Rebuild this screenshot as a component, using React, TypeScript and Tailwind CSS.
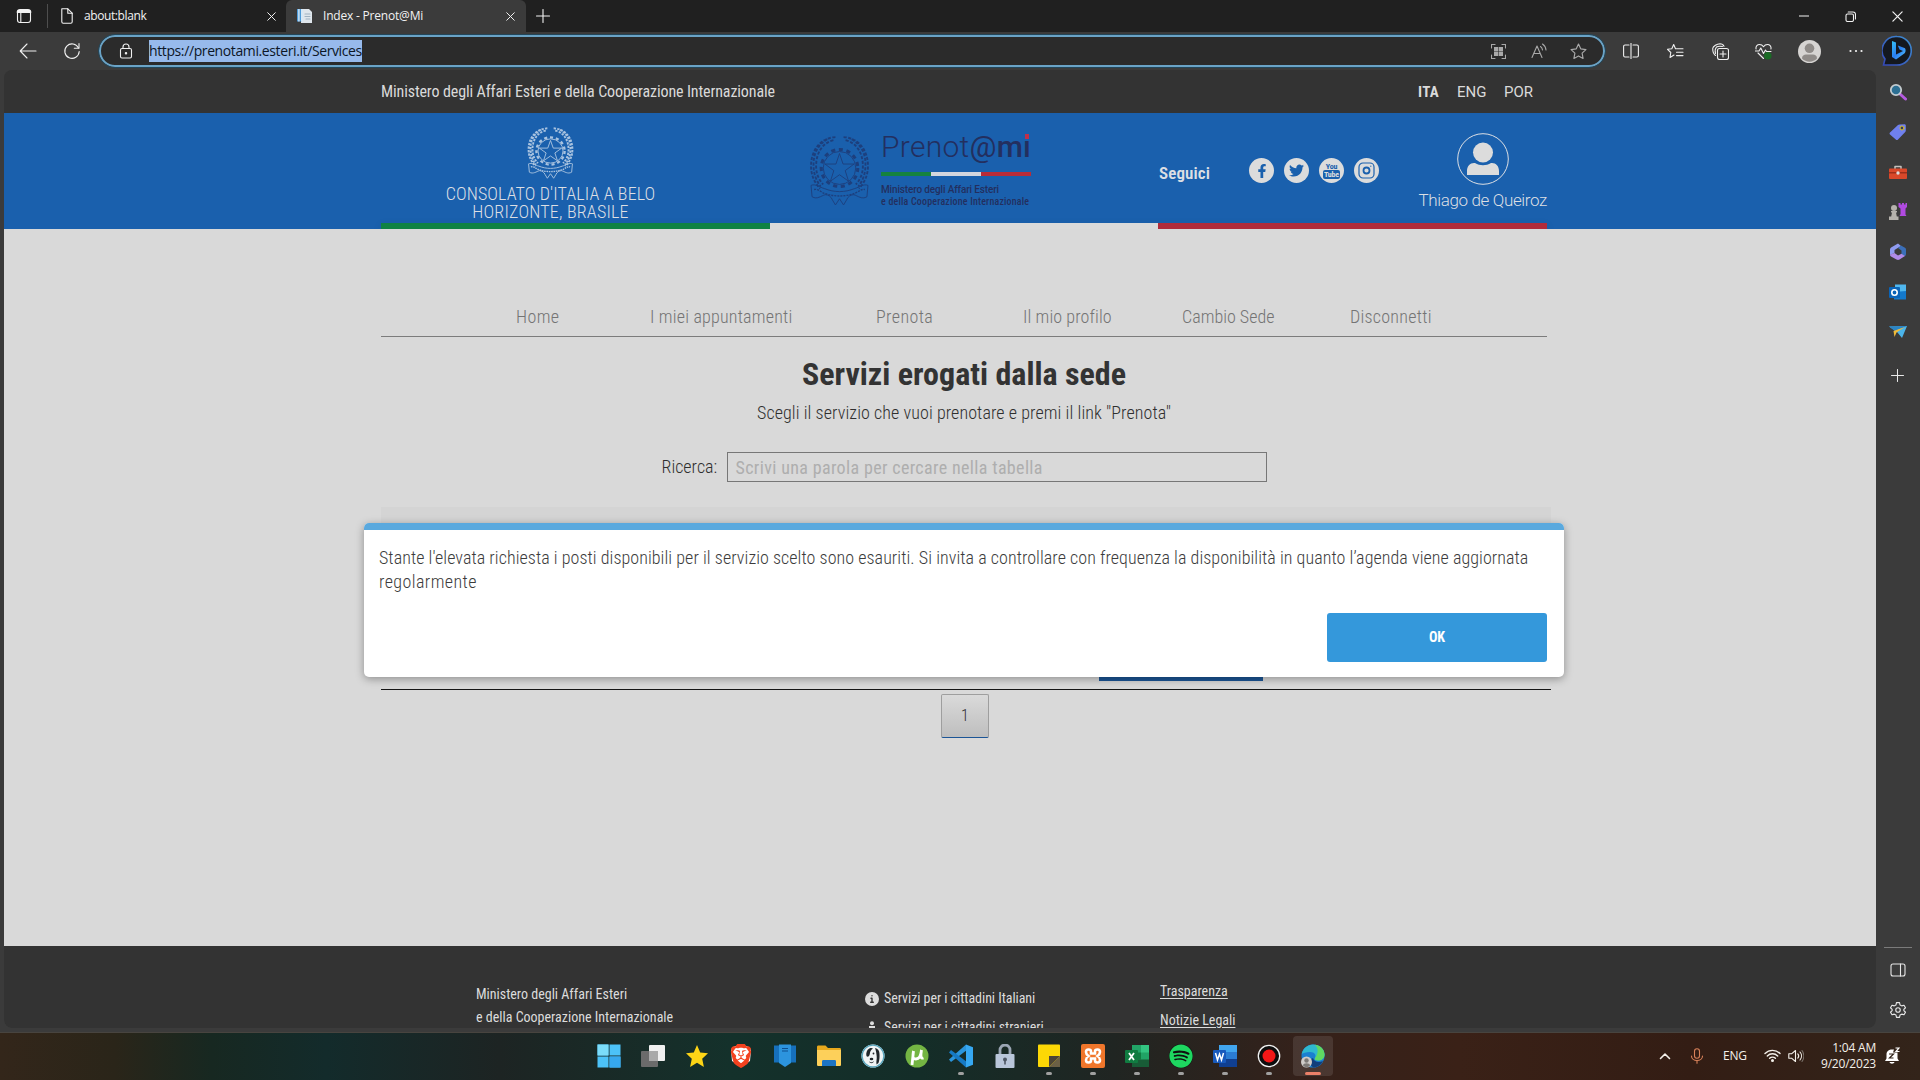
import type { ReactNode } from "react";
import { FaFacebookF, FaSpotify } from "react-icons/fa";
import { SiBrave } from "react-icons/si";
import { FaTwitter } from "react-icons/fa6";

function Svg({ s = 16, vb = "0 0 16 16", className = "", children }: { s?: number; vb?: string; className?: string; children: ReactNode }) {
  return (
    <svg width={s} height={s} viewBox={vb} fill="none" stroke="currentColor" strokeWidth="1.1" strokeLinecap="round" strokeLinejoin="round" className={`shrink-0 ${className}`}>
      {children}
    </svg>
  );
}

const CloseIcon = ({ s = 10 }: { s?: number }) => (
  <Svg s={s} vb="0 0 10 10"><path d="M.8.8l8.4 8.4M9.2.8L.8 9.2" /></Svg>
);

const PlusIcon = ({ s = 14 }: { s?: number }) => (
  <Svg s={s} vb="0 0 14 14"><path d="M7 .5v13M.5 7h13" /></Svg>
);

function TabStrip() {
  return (
    <div className="flex h-8 w-full shrink-0 items-center bg-[#202020] text-[#f2f2f2]">
      <div className="flex w-12 justify-center border-r border-[#4e4e4e] py-0.5">
        <Svg s={16} className="my-0.5">
          <rect x="1.5" y="1.5" width="13" height="13" rx="2.5" />
          <path d="M1.5 4h13M2 3h12" strokeWidth="1.8" />
          <path d="M4.8 5v9.5" />
        </Svg>
      </div>
      <div className="flex h-full w-[238px] items-center pl-[11px]">
        <Svg s={16}>
          <path d="M2.8.8h6l4.4 4.4v8.6c0 .8-.5 1.4-1.4 1.4H4.2c-.9 0-1.4-.6-1.4-1.4z" />
          <path d="M8.8.8v4.4h4.4" />
        </Svg>
        <span className="ml-[9px] w-[183px] whitespace-nowrap text-xs tracking-[-0.4px]">about:blank</span>
        <CloseIcon s={9} />
      </div>
      <div className="flex h-full w-[240px] items-center rounded-t-md bg-[#3b3b3b] pl-[11px]">
        <Svg s={16}>
          <path d="M4 1h8l3 3v11H4z" fill="#dfe6ec" stroke="none" />
          <path d="M0 1h4.5v12.5H0z" fill="#4e9bd8" stroke="none" />
          <path d="M1.200 1h1.400v12.500H1.200zM4 1h2v12.500H4z" fill="#d6e8f6" stroke="none" />
          <path d="M8 6h5M8 8.500h5M9 11h4" stroke="#9fb2c1" />
        </Svg>
        <span className="ml-[10px] w-[183px] whitespace-nowrap text-xs tracking-[-0.2px]">Index - Prenot@Mi</span>
        <CloseIcon s={9} />
      </div>
      <div className="ml-[10px] flex-1"><PlusIcon s={14} /></div>
      <div className="flex items-center pr-[17px]">
        <Svg s={10} vb="0 0 10 10"><path d="M0 5h10" /></Svg>
        <Svg s={11} vb="0 0 11 11" className="ml-9">
          <rect x="1" y="3" width="7.500" height="7.500" rx="1.5" />
          <path d="M3.200 1h4.800c1.500 0 2.500 1 2.500 2.500v4.500" />
        </Svg>
        <span className="ml-9"><CloseIcon s={11} /></span>
      </div>
    </div>
  );
}

function BingBadge() {
  return (
    <svg width="30" height="32" viewBox="0 0 30 32" className="shrink-0">
      <defs>
        <linearGradient id="bingRing" x1="0" y1="1" x2="1" y2="0">
          <stop offset="0" stopColor="#3447b8" />
          <stop offset="1" stopColor="#3f8fd0" />
        </linearGradient>
        <linearGradient id="bingB" x1="0" y1="0" x2="1" y2="1">
          <stop offset="0" stopColor="#35c3f5" />
          <stop offset=".5" stopColor="#2a7df0" />
          <stop offset="1" stopColor="#55c8ff" />
        </linearGradient>
      </defs>
      <path d="M15 1.500a14 14 0 1 1 0 28.500H1.500l1.500-6A14 14 0 0 1 15 1.500z" fill="#14181f" stroke="url(#bingRing)" strokeWidth="1.600" />
      <path d="M10 6l4 1.500v12l7-3.500-3.500-1.500-1.700-4 6.700 2.500c1.500.6 1.500 4.500-.2 5.600L14 24.500l-4-2.500z" fill="url(#bingB)" />
    </svg>
  );
}

function Toolbar() {
  return (
    <div className="flex h-[38px] w-full shrink-0 items-center bg-[#3b3b3b] pr-2 text-[#f0f0f0]">
      <Svg s={18} vb="0 0 18 18" className="ml-[19px]"><path d="M17 9H1.500M8 2L1.200 9 8 16" /></Svg>
      <Svg s={18} vb="0 0 18 18" className="ml-[26px]">
        <path d="M15.500 6A7.200 7.200 0 1 0 16.200 9.500" />
        <path d="M16 1.500V6.200h-4.700" />
      </Svg>
      <div className="ml-[18px] flex h-8 w-[1506px] items-center rounded-full border-2 border-[#6aa3c6] bg-[#2b2b2b] pl-[17px] outline-1 outline-[#23475b]">
        <Svg s={16}>
          <rect x="2.500" y="5.500" width="11" height="9.500" rx="1.500" />
          <path d="M5 5.500V4a3 3 0 0 1 6 0v1.500" />
          <circle cx="8" cy="10.200" r=".7" fill="currentColor" />
        </Svg>
        <span className="ml-[15px] h-[22px] whitespace-nowrap bg-[#97baec] text-sm leading-[22px] tracking-[-0.39px] text-[#0c1626]">https://prenotami.esteri.it/Services</span>
        <div className="flex flex-1 items-center justify-end pr-4 text-[#a9a9a9]">
          <Svg s={15} vb="0 0 15 15">
            <path d="M.5 4V.5H4M11 .5h3.500V4M14.500 11v3.500H11M4 14.500H.5V11" />
            <path d="M3 3h4.200v4.200H3zM7.800 3H12v4.200H7.800zM3 7.800h4.200V12H3zM7.800 7.800H12V12H7.800z" fill="currentColor" stroke="none" />
          </Svg>
          <Svg s={16} className="ml-[25px]">
            <path d="M1 14.500L6 3l5 11.500M2.800 10.500h6.400" />
            <path d="M9.500 3.500a5 5 0 0 1 2 3.500M11.500 1a8 8 0 0 1 3.500 6" />
          </Svg>
          <Svg s={17} vb="0 0 16 16" className="ml-[23px]">
            <path d="M8 1l2.100 4.500 4.900.7-3.600 3.400.9 4.900L8 12.200l-4.300 2.300.9-4.900L1 6.200l4.900-.7z" />
          </Svg>
        </div>
      </div>
      <Svg s={16} className="ml-[18px]">
        <path d="M8 0v16M6 2H2C1.200 2 .6 2.600.6 3.400v9.200c0 .8.6 1.400 1.400 1.400h4M10 2h4c.8 0 1.400.6 1.400 1.400v9.200c0 .8-.6 1.400-1.400 1.400h-4" />
      </Svg>
      <Svg s={17} vb="0 0 17 17" className="ml-7">
        <path d="M8.500 5.800L6.700 1.500 4.800 5.700.5 6.300l3.300 3.200-.8 5 4-2.500M8.500 5.800H16M9.500 9.200H16M9.500 12.600H16" />
      </Svg>
      <Svg s={17} vb="0 0 17 17" className="ml-7">
        <rect x="5.500" y="5.500" width="11" height="11" rx="2" />
        <path d="M11 8v6M8 11h6M3.500 12.500C1.500 11 .7 8 .7 5.500 1 3 5 .8 8 .7c2 0 3.300 1 4 2.500M3.500 10.500c-.5-2-.3-5 1-6.500 1.500-.8 4-.8 6-.5" />
      </Svg>
      <Svg s={17} vb="0 0 17 17" className="ml-[26px]">
        <path d="M1 6C.5 3 2.500 1.500 4.500 1.500S7.700 2.500 8.500 3.700C9.300 2.500 10.500 1.500 12.500 1.500S16.500 3 16 6M3 10l5.500 5.500" />
        <path d="M0 8h4l1.800-3 2.700 5.500L10.500 7l1 1.500H16" />
        <circle cx="12.800" cy="12.800" r="3.800" fill="#1a6b25" stroke="none" />
      </Svg>
      <svg width="23" height="23" viewBox="0 0 23 23" className="ml-[26px] shrink-0">
        <circle cx="11.500" cy="11.500" r="11.500" fill="#d6d4d2" />
        <circle cx="11.500" cy="8.300" r="4.800" fill="#8f8b88" />
        <path d="M4 18.500c0-3 2-4 4-4h7c2 0 4 1 4 4a10.500 10.500 0 0 1-15 0z" fill="#8f8b88" />
      </svg>
      <Svg s={14} vb="0 0 14 14" className="ml-7">
        <path d="M1.500 7h.01M7 7h.01M12.500 7h.01" strokeWidth="2.200" />
      </Svg>
      <span className="ml-auto"><BingBadge /></span>
    </div>
  );
}

function Sidebar() {
  return (
    <div className="flex w-11 shrink-0 flex-col items-center bg-[#3b3b3b] pt-[13px] pr-px text-[#e8e8e8]">
      <div className="flex flex-col items-center gap-[22px]">
        <Svg s={18} vb="0 0 18 18">
          <path d="M11 11l5.500 5" stroke="#b45be0" strokeWidth="3" />
          <circle cx="7" cy="7" r="5.200" fill="#2c6f93" stroke="#c3cbcf" strokeWidth="1.800" />
        </Svg>
        <Svg s={18} vb="0 0 18 18">
          <path d="M1 9.500L9 2c.5-.4 1-.6 1.600-.6L15.500 1.200c.8 0 1.300.6 1.300 1.300v5c0 .7-.3 1.200-.8 1.700l-7 7.200c-.7.7-1.500.7-2.200 0L1 11.500c-.6-.6-.6-1.400 0-2z" fill="#6f80ee" stroke="none" />
          <circle cx="13" cy="5" r="2" fill="#35395a" stroke="#d8c02c" strokeWidth="1" />
        </Svg>
        <Svg s={18} vb="0 0 18 18">
          <path d="M6 6V3.500h6V6" stroke="#c6c1bd" strokeWidth="1.500" />
          <path d="M0 6.500C0 6 .5 5.500 1 5.500h16c.5 0 1 .5 1 1V15c0 .5-.5 1-1 1H1c-.5 0-1-.5-1-1z" fill="#d9482a" stroke="none" />
          <path d="M0 9h18v1.500H0z" fill="#9c2f1b" stroke="none" />
          <circle cx="9" cy="10" r="1.700" fill="#ddd" stroke="none" />
        </Svg>
        <Svg s={18} vb="0 0 18 18">
          <path d="M9.500 0h2v1.500H13V0h2v1.500h1.500V0H18v4l-1.500 1.500v6l1 1.500h-7l1-2V5.500L9.500 4z" fill="#b04ae0" stroke="none" />
          <circle cx="5" cy="5" r="3" fill="#b5b2ac" stroke="none" />
          <path d="M2 8h6v1.500H7l.8 4H9.500V17H0v-3.500h2.200l.8-4H2z" fill="#b5b2ac" stroke="none" />
        </Svg>
        <Svg s={18} vb="0 0 18 18">
          <path d="M9 .5L2.500 4.200C1.500 4.800 1 5.500 1 6.600V12l4.500-2V7L12 3z" fill="#8f9bf0" stroke="none" />
          <path d="M12 2.500l4 2.300c.7.400 1 1 1 1.800V11c0 1-.4 1.800-1.200 2.200L12.500 11V7.500L9 5z" fill="#3b6fb8" stroke="none" />
          <path d="M1 11.800L5.500 10 9 12.500l3.500-1.700 3.500 2.200-5.500 3.600c-1 .6-2 .6-3 0L2 13.500C1.300 13 1 12.500 1 11.800z" fill="#b08be8" stroke="none" />
        </Svg>
        <Svg s={18} vb="0 0 18 18">
          <path d="M6 1.500h11V12H6z" fill="#50b7ee" stroke="none" />
          <path d="M5 9l12-1v8.500H5z" fill="#1379cc" stroke="none" />
          <rect x="0" y="4" width="11" height="11" rx="1" fill="#0a64b8" stroke="none" />
          <circle cx="5.500" cy="9.500" r="2.700" stroke="#fff" strokeWidth="1.600" />
        </Svg>
        <Svg s={18} vb="0 0 18 18">
          <path d="M0 3.500L18 3 13 15 8.500 9.500z" fill="#4bb4ea" stroke="none" />
          <path d="M0 3.500L18 3 6 8z" fill="#2b84c4" stroke="none" />
          <path d="M4.500 8L16 4 7.500 9.500 5.500 14z" fill="#f0bb3a" stroke="none" />
        </Svg>
      </div>
      <div className="mt-7"><PlusIcon s={13} /></div>
      <div className="flex-1" />
      <div className="h-px w-7 bg-[#7b7b7b]" />
      <Svg s={16} className="mt-[14px]">
        <rect x="1" y="2" width="14" height="12" rx="2" />
        <path d="M10.500 2v12" />
      </Svg>
      <Svg s={18} vb="0 0 24 24" className="mt-[23px] mb-[13px]">
        <path strokeWidth="1.500" d="M12 2l2 .2.700 3 2.300 1.300L20 5.600l2 3.400-2.200 2.200v1.600L22 15l-2 3.400-3-.9-2.300 1.300-.7 3h-4l-.7-3L7 17.500l-3 .9L2 15l2.200-2.200v-1.600L2 9l2-3.400 3 .9 2.300-1.300.7-3z" />
        <circle cx="12" cy="12" r="3" strokeWidth="1.500" />
      </Svg>
    </div>
  );
}

const STAR = "M30 19l3.500 10.200h10.800l-8.700 6.400 3.300 10.300L30 39.600l-8.900 6.300 3.300-10.300-8.700-6.400h10.800z";

function Emblem({ className, w, h, stroke }: { className: string; w: number; h: number; stroke: number }) {
  return (
    <svg width={w} height={h} viewBox="0 0 60 70" fill="none" stroke="currentColor" strokeWidth={stroke} className={`shrink-0 ${className}`} preserveAspectRatio="none">
      <circle cx="30" cy="33" r="16" />
      <circle cx="30" cy="33" r="18" strokeDasharray="4 3.600" strokeWidth="3" />
      <path d={STAR} />
      <path d="M26 3C10 4 2 17 2 31c0 10 4 17 9 22M24 6C12 9 7 20 7 31c0 8 3 14 7 18M18 5C8 11 4 20 4.500 31c0 8 3 15 7 20" strokeDasharray="3 1.600" strokeWidth={stroke * 2} />
      <path d="M34 3c16 1 24 14 24 28 0 10-4 17-9 22M36 6c12 3 17 14 17 25 0 8-3 14-7 18M42 5c10 6 14 15 13.500 26 0 8-3 15-7 20" strokeDasharray="3 1.600" strokeWidth={stroke * 2} />
      <path d="M2 50c4-2 9 2 13 3 10 4 20 4 30 0 4-1 9-5 13-3l-1 11c-5 3-9-1-13-2-3 0-6 2-7 5l-3 5-4-6-4 6-3-5c-1-3-4-5-7-5-4 1-8 5-13 2z" />
      <path d="M5 54c4-1 7 3 11 4 9 3 19 3 28 0 4-1 7-5 11-4" strokeWidth={stroke * 1.5} strokeDasharray="2 1" />
    </svg>
  );
}

function SocialCircle({ children }: { children: ReactNode }) {
  return <div className="flex size-[25px] items-center justify-center rounded-full bg-[#dcdcdc] text-[#1a60ad]">{children}</div>;
}

function SiteHeader() {
  return (
    <header className="shrink-0 [font-stretch:75%]">
      <div className="flex h-[43px] bg-[#333] pl-[377px] text-base text-[#dadada]">
        <span className="w-[1037px] whitespace-nowrap leading-[43px] tracking-[-0.12px]">Ministero degli Affari Esteri e della Cooperazione Internazionale</span>
        <nav className="flex text-[15px] leading-[44px]">
          <span className="w-[39px] font-bold tracking-[0.3px]">ITA</span>
          <span className="w-[47px] [font-stretch:88%]">ENG</span>
          <span className="[font-stretch:88%]">POR</span>
        </nav>
      </div>
      <div className="h-[116px] bg-[#1a60ad] pl-[377px]">
        <div className="flex h-[110px] w-[1166px] text-[#dcdfe4]">
          <div className="flex w-[389px] flex-col items-center pt-[13px] pr-[50px]">
            <Emblem w={47} h={53} stroke={1.2} className="text-[#a9c3e0]" />
            <div className="mt-[6px] flex flex-col items-center whitespace-nowrap text-lg leading-[18px] font-light">
              <span className="tracking-[0.12px]">CONSOLATO D'ITALIA A BELO</span>
              <span className="tracking-[0.2px]">HORIZONTE, BRASILE</span>
            </div>
          </div>
          <div className="flex w-[389px] pl-[39px] text-[#232f5f]">
            <Emblem w={61} h={72} stroke={0.9} className="mt-[21px] text-[#1d3f7d]" />
            <div className="ml-[11px] w-[150px] pt-[17px]">
              <div className="whitespace-nowrap text-[30px] leading-[34px] font-light tracking-[0.3px] [font-stretch:100%]">
                Prenot<span className="font-normal">@</span><span className="font-medium tracking-normal">m</span><span className="relative font-medium">ı<span className="absolute top-[5px] left-[2px] h-[5px] w-1 bg-[#c0304a]" /></span>
              </div>
              <div className="mt-2 flex h-1">
                <div className="flex-1 bg-[#15823f]" /><div className="flex-1 bg-[#d3d6de]" /><div className="flex-1 bg-[#b92c38]" />
              </div>
              <div className="mt-[8px] flex flex-col whitespace-nowrap text-[10px] leading-3 font-medium">
                <span className="tracking-[-0.15px] [font-stretch:100%]">Ministero degli Affari Esteri</span>
                <span className="tracking-[0.17px] [font-stretch:75%]">e della Cooperazione Internazionale</span>
              </div>
            </div>
          </div>
          <div className="flex w-[388px] items-start">
            <span className="mt-[48px] w-[90px] text-[17px] leading-6 font-semibold tracking-[0.1px]">Seguici</span>
            <div className="mt-[45px] flex gap-[10px]">
              <SocialCircle><FaFacebookF className="size-[14px]" /></SocialCircle>
              <SocialCircle><FaTwitter className="size-[15px]" /></SocialCircle>
              <SocialCircle>
                <span className="flex flex-col items-center text-[8px] leading-[7px] font-bold tracking-[-0.2px]">
                  <span>You</span>
                  <span className="rounded-[2px] bg-[#1a60ad] px-px py-px text-[#dcdcdc]">Tube</span>
                </span>
              </SocialCircle>
              <SocialCircle>
                <Svg s={17} vb="0 0 17 17">
                  <rect x="1" y="1" width="15" height="15" rx="4" strokeWidth="1.200" />
                  <circle cx="8.500" cy="8.500" r="3" strokeWidth="1.800" />
                  <circle cx="12.800" cy="4.200" r=".6" fill="currentColor" stroke="none" />
                </Svg>
              </SocialCircle>
            </div>
            <div className="mt-5 ml-auto flex flex-col items-center">
              <svg width="52" height="52" viewBox="0 0 52 52" fill="none">
                <circle cx="26" cy="26" r="25.300" stroke="#dcdfe4" />
                <circle cx="26" cy="19.500" r="10" fill="#dcdcdc" />
                <path d="M10 42v-4c0-5 3-8 7-8h1c5 3 11 3 16 0h1c4 0 7 3 7 8v4z" fill="#dcdcdc" />
              </svg>
              <span className="mt-[3px] whitespace-nowrap text-[17px] leading-6 font-light tracking-[-0.36px] [font-stretch:100%]">Thiago de Queiroz</span>
            </div>
          </div>
        </div>
        <div className="flex h-[6px] w-[1166px] shadow-[0_3px_10px_rgba(0,0,0,.1)]">
          <div className="w-[389px] bg-[#0f8243]" />
          <div className="flex-1 bg-[#dadada]" />
          <div className="w-[389px] bg-[#b12b3a]" />
        </div>
      </div>
    </header>
  );
}

function Dialog() {
  return (
    <div className="absolute top-[453px] left-[360px] h-[154px] w-[1200px] overflow-hidden rounded-[5px] bg-white shadow-[0_2px_8px_rgba(0,0,0,.35)] [font-stretch:75%]">
      <div className="h-[7px] bg-[#5aa9de]" />
      <p className="mt-4 ml-[15px] text-lg leading-6 font-light text-[#3c3c3c]">
        <span className="block whitespace-nowrap tracking-[0.05px]">Stante l'elevata richiesta i posti disponibili per il servizio scelto sono esauriti. Si invita a controllare con frequenza la disponibilità in quanto l’agenda viene aggiornata</span>
        <span className="block tracking-[0.4px]">regolarmente</span>
      </p>
      <button className="mt-[19px] ml-[963px] block h-[49px] w-[220px] rounded-[3px] bg-[#3498db] pb-px text-sm font-bold text-white">OK</button>
    </div>
  );
}

function Services() {
  return (
    <main className="h-[717px] shrink-0 bg-[#d9d9d9] pl-[377px] text-lg font-light text-[#2f2f2f] [font-stretch:75%]">
      <nav className="flex h-[108px] w-[1166px] items-end whitespace-nowrap border-b border-[#7c7c7c] pb-[7px] pl-[135px] leading-6 text-[#747474]">
        <span className="w-[134px] tracking-[0.4px]">Home</span>
        <span className="w-[226px] tracking-[0.19px]">I miei appuntamenti</span>
        <span className="w-[147px] tracking-[0.4px]">Prenota</span>
        <span className="w-[159px] tracking-[0.1px]">Il mio profilo</span>
        <span className="w-[168px]">Cambio Sede</span>
        <span className="tracking-[0.25px]">Disconnetti</span>
      </nav>
      <div className="flex w-[1166px] flex-col items-center">
        <h1 className="mt-[17px] text-[32px] leading-10 font-bold text-[#333]">Servizi erogati dalla sede</h1>
        <p className="mt-[7px] leading-6 tracking-[0.08px]">Scegli il servizio che vuoi prenotare e premi il link "Prenota"</p>
        <div className="mt-[27px] flex h-[30px] items-center">
          <span className="w-[65px]">Ricerca:</span>
          <div className="h-[30px] w-[540px] border border-[#777] pl-2 leading-[29px] font-normal tracking-[0.35px] text-[#aeaeae]">Scrivi una parola per cercare nella tabella</div>
        </div>
      </div>
      <div className="mt-[25px] flex h-[183px] w-[1170px] flex-col justify-between border-b border-[#151515]">
        <div className="h-[30px] bg-[#d4d4d4]" />
        <div className="mb-2 ml-[718px] h-[60px] w-[164px] bg-[#1c5596]" />
      </div>
      <div className="mt-1 ml-[560px] flex h-[44px] w-[48px] items-center justify-center rounded-[2px] border border-b-[#1c5596] border-[#9e9e9e] bg-linear-to-b from-[#dadada] to-[#bebebe] text-base">1</div>
    </main>
  );
}

function SiteFooter() {
  return (
    <footer className="flex h-[82px] shrink-0 overflow-hidden rounded-b-lg bg-[#333] pl-[472px] text-sm text-[#dcdcdc] [font-stretch:75%]">
      <div className="w-[389px] pt-[37px] leading-[23px] whitespace-nowrap">
        <div>Ministero degli Affari Esteri</div>
        <div>e della Cooperazione Internazionale</div>
      </div>
      <div className="w-[295px] pt-[38px] leading-[29px] whitespace-nowrap">
        <div className="flex items-center gap-[5px]">
          <Svg s={14} vb="0 0 14 14">
            <circle cx="7" cy="7" r="7" fill="#dcdcdc" stroke="none" />
            <path d="M7 3.700v.01M6 6.200h1v4M5.700 10.300h2.600" stroke="#333" strokeWidth="1.400" />
          </Svg>
          <span className="tracking-[-0.05px]">Servizi per i cittadini Italiani</span>
        </div>
        <div className="flex items-start gap-[5px]">
          <Svg s={14} vb="0 0 14 14" className="mt-2">
            <circle cx="7" cy="2.200" r="2" fill="#dcdcdc" stroke="none" />
            <path d="M4 5h6v5H9v4H5v-4H4z" fill="#dcdcdc" stroke="none" />
          </Svg>
          <span className="tracking-[-0.03px]">Servizi per i cittadini stranieri</span>
        </div>
      </div>
      <div className="flex flex-col items-start pt-[31px] leading-[29px] underline underline-offset-2">
        <span>Trasparenza</span>
        <span>Notizie Legali</span>
      </div>
    </footer>
  );
}

function AppSlot({ children, dot = false, active = false }: { children: ReactNode; dot?: boolean; active?: boolean }) {
  return (
    <div className={`flex h-10 w-10 flex-col items-center rounded-[4px] pt-2 ${active ? "bg-white/10" : ""}`}>
      <div className="flex h-6 w-6 items-center justify-center">{children}</div>
      {dot && <div className="mt-[4px] h-[3px] w-1.5 rounded-full bg-[#a0a0a0]" />}
      {active && <div className="mt-[4px] h-[3px] w-4 rounded-full bg-[#ec8068]" />}
    </div>
  );
}

const G = ({ children }: { children: ReactNode }) => <svg width="24" height="24" viewBox="0 0 24 24">{children}</svg>;

function Taskbar() {
  return (
    <div className="flex h-[48px] shrink-0 items-center border-t border-[#48443f] bg-[linear-gradient(90deg,#33261a_0%,#2a2519_6%,#172821_11%,#132b2b_17%,#1d2423_26%,#14312b_38%,#142d28_48%,#202522_58%,#35211a_68%,#3a2117_76%,#331d14_88%,#33241a_100%)] pb-0.5 pl-[589px] text-xs text-[#f4f0ea]">
      <div className="flex gap-1">
        <AppSlot><G><path d="M0.500.5h11v11H.5zM12.500.5h11v11h-11zM.5 12.500h11v11H.5zM12.500 12.500h11v11h-11z" fill="#4cc2f8" /><path d="M.5.5h11v11H.5z" fill="#7bdcfa" /><path d="M12.500 12.500h11v11h-11z" fill="#36a8ee" /></G></AppSlot>
        <AppSlot><G><rect x="8" y="1" width="16" height="16" rx="1" fill="#f0f0f0" /><rect x="0" y="7" width="17" height="16" rx="1" fill="#6b6b6b" /><path d="M8 7h9v10H8z" fill="#a9a9a9" /></G></AppSlot>
        <AppSlot><G><path d="M12 1l3.200 7.500 7.800.8-5.800 5.400 1.700 8.300-6.900-4.200L5.100 23l1.700-8.300L1 9.300l7.800-.8z" fill="#fdd516" /></G></AppSlot>
        <AppSlot><span className="relative flex"><svg width="24" height="24" viewBox="0 0 24 24" className="absolute"><path d="M6 2h12l4 4-1 11-9 6-9-6L2 6z" fill="#fff" /></svg><SiBrave className="relative size-6 text-[#f4421f]" /></span></AppSlot>
        <AppSlot><G><path d="M1 1.500h22v17H1z" fill="#1670bc" /><path d="M6 .5h12v18.500l-6 4-6-4z" fill="#2c94de" /><path d="M9 4.500h6M9 7h6" stroke="#0d4f8f" /></G></AppSlot>
        <AppSlot><G><path d="M0 3c0-1 .5-1.500 1.500-1.500h7L11 4h11.500c1 0 1.500.5 1.500 1.500V21H0z" fill="#e8a91d" /><path d="M0 6h24v14.500c0 1-.5 1.500-1.500 1.500h-21C.5 22 0 21.500 0 20.500z" fill="#fdd05a" /><path d="M5 22v-4.500c0-1 .5-1.500 1.500-1.500h11c1 0 1.500.5 1.500 1.500V22z" fill="#1c74c4" /></G></AppSlot>
        <AppSlot><G>
          <circle cx="12" cy="12" r="11.500" fill="#f0f4f5" />
          <circle cx="12" cy="12" r="10.900" fill="none" stroke="#5aa6bd" strokeWidth="1.300" />
          <path d="M6.500 6C8 3.800 11 3.500 12 4.500c-2 1-3 3-3.200 5.500-.3 2-1.500 3-3 2.500-1-1.500-.6-4.500.7-6.500zM14 4c3 .5 4.500 3 4.500 6 .2 3 0 6-1 9l-2 1.500c-.5-3 .5-5.500.2-8C15.500 10 15 6.500 14 4z" fill="#20262a" />
          <ellipse cx="10.500" cy="15" rx="1.800" ry="1.300" fill="#20262a" />
          <path d="M8.500 18c1.500 1 3 .8 4-.2" fill="none" stroke="#20262a" />
          <circle cx="12.500" cy="9.500" r=".9" fill="#20262a" />
        </G></AppSlot>
        <AppSlot><G><circle cx="12" cy="12" r="11.500" fill="#74b543" /><path d="M7 21l1.500-14M8.500 7c-1 6-1 8 2.500 8 4 0 5-4 5.500-9M16.500 6c-1 6-1 9 2 8" fill="none" stroke="#fff" strokeWidth="2.800" /></G></AppSlot>
        <AppSlot dot><G><path d="M17 0.500l-17 15 2 2.500 16-12z" fill="#2b95dc" /><path d="M17 23.500L0 8.500 2 6l16 12z" fill="#1679c4" /><path d="M17 .5l7 2.800v17.400l-7 2.800z" fill="#36a8f2" /></G></AppSlot>
        <AppSlot><G><path d="M7 11V6a5 5 0 0 1 10 0v5" fill="none" stroke="#9ba6b4" strokeWidth="2.800" /><rect x="2.500" y="10" width="19" height="14" rx="1" fill="#b9c6da" /><circle cx="12" cy="15.500" r="2" fill="#4e5765" /><path d="M11.200 16h1.600v4.500h-1.600z" fill="#4e5765" /></G></AppSlot>
        <AppSlot dot><G><path d="M1 1.500C1 1 1.500.5 2 .5h20c.5 0 1 .5 1 1V23H2c-.5 0-1-.5-1-1z" fill="#fcd805" /><path d="M12 23V12h11z" fill="#4c4537" /><path d="M12 23l11-11v11z" fill="#6b6045" /></G></AppSlot>
        <AppSlot dot><G>
          <rect x="0" y="0" width="24" height="24" rx="2" fill="#f0762b" />
          <path d="M7.500 5.500c2 0 2.500 1 2.500 2v2h4v-2c0-1 .5-2 2.500-2s2.500 1 2.500 2.500-1 3-2.500 4c1.500 1 2.500 2.500 2.500 4s-.5 2.500-2.500 2.500-2.500-1-2.500-2v-2h-4v2c0 1-.5 2-2.500 2S5 17.500 5 16s1-3 2.500-4C6 11 5 9.500 5 8s.5-2.500 2.500-2.500z" fill="none" stroke="#fff" strokeWidth="2.600" />
        </G></AppSlot>
        <AppSlot dot><G><path d="M7 1h17v22H7z" fill="#21a366" /><path d="M7 8.500h9v7H7z" fill="#107c41" /><path d="M16 1h8v7.500h-8z" fill="#33c481" /><path d="M7 15.500h17V23H7z" fill="#185c37" /><rect y="6" width="13" height="13" rx="1" fill="#107c41" /><path d="M4 9l5 7M9 9l-5 7" stroke="#fff" strokeWidth="1.800" /></G></AppSlot>
        <AppSlot dot><span className="flex rounded-full bg-[#101010]"><FaSpotify className="size-6 text-[#1ed760]" /></span></AppSlot>
        <AppSlot dot><G><path d="M6 1h18v7H6z" fill="#41a5ee" /><path d="M6 8h18v7H6z" fill="#2b7cd3" /><path d="M6 15h18v8H6z" fill="#103f91" /><rect y="6" width="13" height="13" rx="1" fill="#185abd" /><path d="M2.500 9l2 7L6.500 10l2 6 2-7" stroke="#fff" strokeWidth="1.500" fill="none" /></G></AppSlot>
        <AppSlot dot><G><circle cx="12" cy="12" r="10.700" fill="#0d0d0d" stroke="#f2f2f2" strokeWidth="1.300" /><circle cx="12" cy="12" r="6.500" fill="#f21717" /></G></AppSlot>
        <AppSlot active><G>
          <circle cx="12" cy="12" r="11.500" fill="#1a7fd0" />
          <path d="M.8 10C2 4 7 .5 12 .5c7 0 11.500 4.500 11.500 10 0 4-3 6-6.500 6-2.500 0-4-.8-3-2.500 1.500-2.500 0-6-5-6-4 0-7 1-8.200 2z" fill="#2fb8cf" />
          <path d="M14 .7c6 1 9.500 5.300 9.500 9.800 0 4-3 6-6.500 6-2.500 0-4-.8-3-2.500C17 10 18 5 14 .7z" fill="#5fd862" />
          <path d="M12 14c1 4 6 5 10 3a11.500 11.500 0 0 1-9 6.500C8 22 8 15 12 14z" fill="#113f7c" />
          <circle cx="5.500" cy="18" r="5.500" fill="#cfcbc8" /><circle cx="5.500" cy="16.500" r="2.200" fill="#7c7875" /><path d="M2 21.500c0-3 7-3 7 0-2 2-5 2-7 0z" fill="#7c7875" />
        </G></AppSlot>
      </div>
      <div className="ml-auto flex items-center">
        <Svg s={12} vb="0 0 12 12"><path d="M1.500 8.500L6 4l4.500 4.500" strokeWidth="1.600" /></Svg>
        <Svg s={16} className="ml-[18px] text-[#d9825a]">
          <rect x="5.500" y=".8" width="5" height="9.500" rx="2.500" />
          <path d="M2.500 8c0 6 11 6 11 0M8 12.500v2.800" />
        </Svg>
        <span className="ml-[18px] w-[41px] tracking-[-0.2px]">ENG</span>
        <Svg s={17} vb="0 0 17 17">
          <path d="M1 6.500a10.500 10.500 0 0 1 15 0M3.300 9a7.300 7.300 0 0 1 10.400 0M5.600 11.300a4.200 4.200 0 0 1 5.800 0" strokeWidth="1.400" />
          <circle cx="8.500" cy="13.600" r="1.500" fill="currentColor" stroke="none" />
        </Svg>
        <Svg s={16} className="ml-[7px]">
          <path d="M.8 5.800h2.700L7.500 2.500v11L3.500 10.200H.8zM9.800 5.800c1 1.200 1 3.200 0 4.400M12 4c2 2.300 2 5.700 0 8" />
          <path d="M14 2.500c2.300 3.300 2.300 7.700 0 11" stroke="#79716a" />
        </Svg>
        <div className="w-[72px] text-right leading-4 tracking-[-0.2px]">
          <div>1:04 AM</div>
          <div>9/20/2023</div>
        </div>
        <svg width="16" height="18" viewBox="0 0 16 18" className="mr-5 ml-2">
          <path d="M1 14l1.500-2.500V7.500C2.500 4 5 2.500 8 2.500h2l-1 3h4.500v6L15 14zM5.500 15h5c-.5 2.200-4.500 2.200-5 0z" fill="#fff" />
          <path d="M5 7h4.500l-4 4h4" stroke="#33241a" fill="none" strokeWidth="1.200" />
          <path d="M11.500 1h3.500l-3 3.500h3.500" stroke="#fff" fill="none" strokeWidth="1.200" />
        </svg>
      </div>
    </div>
  );
}

export default function App() {
  return (
    <div className="flex h-[1080px] w-[1920px] flex-col overflow-hidden bg-[#3b3b3b] font-['Open_Sans',sans-serif]">
      <TabStrip />
      <Toolbar />
      <div className="flex h-[962px] shrink-0">
        <div className="relative ml-1 flex h-[958px] w-[1872px] flex-col overflow-hidden rounded-lg font-['Roboto',sans-serif]">
          <SiteHeader />
          <Services />
          <SiteFooter />
          <Dialog />
        </div>
        <Sidebar />
      </div>
      <Taskbar />
    </div>
  );
}
